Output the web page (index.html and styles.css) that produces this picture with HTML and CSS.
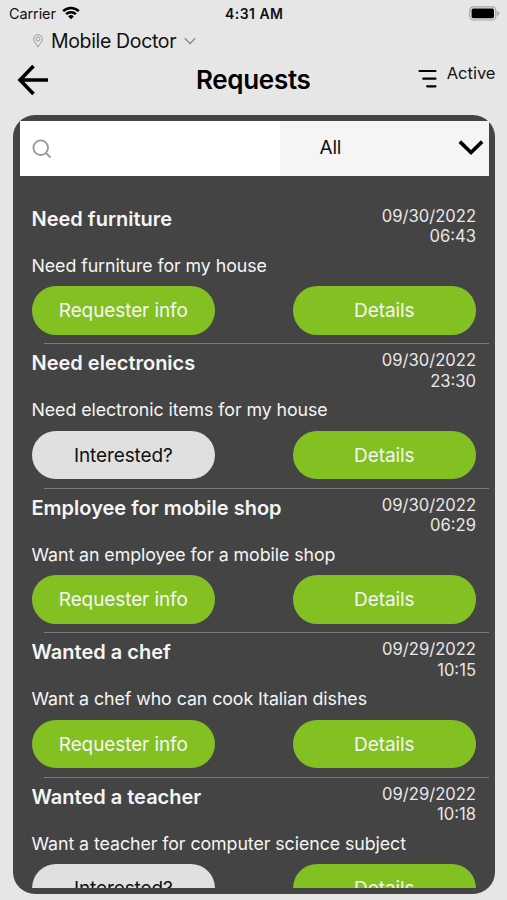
FILE: index.html
```html
<!DOCTYPE html>
<html lang="en">

<head>
    <meta charset="utf-8" />
    <title>Requests</title>
    <meta name="viewport" content="width=device-width, initial-scale=1.0" />
    <link rel="stylesheet" href="styles.css">
</head>

<body>
    <div class="screen">
        <div class="status-bar">
            <div class="carrier">
                <span>Carrier</span>
                <svg class="wifi" viewBox="0 0 18 14">
                    <path d="M1.2 5.2a11.2 11.2 0 0 1 15.6 0M4.1 8.2a7 7 0 0 1 9.8 0" />
                    <path class="dot" d="M9 13.2L6.2 10.4a4 4 0 0 1 5.6 0z" />
                </svg>
            </div>
            <div class="clock">4:31 AM</div>
            <svg class="battery" viewBox="0 0 31 15">
                <rect class="shell" x="0.8" y="0.8" width="26" height="13.2" rx="3.6" />
                <rect class="level" x="2.6" y="2.6" width="22.4" height="9.6" rx="1.6" />
                <path class="tip" d="M28.2 5v5q2-.8 2-2.5t-2-2.5z" />
            </svg>
        </div>

        <div class="location">
            <svg class="pin" viewBox="0 0 10 14">
                <path d="M5 13C3.8 10.6.7 8 .7 5a4.3 4.3 0 0 1 8.6 0c0 3-3.1 5.6-4.3 8z" />
                <circle cx="5" cy="5" r="2" />
            </svg>
            <span>Mobile Doctor</span>
            <svg class="caret" viewBox="0 0 12 8">
                <path d="M.7 1.2L6 6.5l5.3-5.3" />
            </svg>
        </div>

        <div class="header">
            <svg class="back" viewBox="0 0 32 32">
                <path d="M16.5 2L3 16l13.500 14M3 16h28" />
            </svg>
            <h1>Requests</h1>
            <div class="filter">
                <svg viewBox="0 0 19 20">
                    <path d="M1.5 2h16M5.3 9.7h12.2M9.1 17.3h8.4" />
                </svg>
                <span>Active</span>
            </div>
        </div>

        <div class="panel">
            <div class="search-bar">
                <div class="search">
                    <svg viewBox="0 0 20 20">
                        <circle cx="8.7" cy="8.7" r="7.3" />
                        <path d="M14 14l4.5 4.5" />
                    </svg>
                </div>
                <div class="category">
                    <span>All</span>
                    <svg viewBox="0 0 24 16">
                        <path d="M1.5 2.5L12 12.7 22.5 2.5" />
                    </svg>
                </div>
            </div>

            <div class="list">
                <div class="item">
                    <div class="item-top">
                        <h2>Need furniture</h2>
                        <div class="date">09/30/2022<br>06:43</div>
                    </div>
                    <p>Need furniture for my house</p>
                    <div class="actions">
                        <div class="btn">Requester info</div>
                        <div class="btn">Details</div>
                    </div>
                </div>
                <div class="item">
                    <div class="item-top">
                        <h2>Need electronics</h2>
                        <div class="date">09/30/2022<br>23:30</div>
                    </div>
                    <p>Need electronic items for my house</p>
                    <div class="actions">
                        <div class="btn light">Interested?</div>
                        <div class="btn">Details</div>
                    </div>
                </div>
                <div class="item">
                    <div class="item-top">
                        <h2>Employee for mobile shop</h2>
                        <div class="date">09/30/2022<br>06:29</div>
                    </div>
                    <p>Want an employee for a mobile shop</p>
                    <div class="actions">
                        <div class="btn">Requester info</div>
                        <div class="btn">Details</div>
                    </div>
                </div>
                <div class="item">
                    <div class="item-top">
                        <h2>Wanted a chef</h2>
                        <div class="date">09/29/2022<br>10:15</div>
                    </div>
                    <p>Want a chef who can cook Italian dishes</p>
                    <div class="actions">
                        <div class="btn">Requester info</div>
                        <div class="btn">Details</div>
                    </div>
                </div>
                <div class="item">
                    <div class="item-top">
                        <h2>Wanted a teacher</h2>
                        <div class="date">09/29/2022<br>10:18</div>
                    </div>
                    <p>Want a teacher for computer science subject</p>
                    <div class="actions">
                        <div class="btn light">Interested?</div>
                        <div class="btn">Details</div>
                    </div>
                </div>
            </div>
        </div>
    </div>
</body>

</html>
```
FILE: styles.css
```css
:root {
    --page: #e6e6e6;
    --panel: #444444;
    --green: #83c122;
    --light: #e0e0e0;
}

* {
    margin: 0;
    padding: 0;
    box-sizing: border-box;
}

body {
    background-color: var(--page);
    font-family: Inter, "Liberation Sans", sans-serif;
    color: #111;
}

svg {
    display: block;
    flex: none;
    fill: none;
    stroke: currentColor;
}

.screen {
    height: 900px;
    padding: 0 12.5px 6px 13px;
    display: flex;
    flex-direction: column;
    overflow: hidden;
}

.status-bar {
    height: 27px;
    margin: 0 -5px 0 -4px;
    display: grid;
    grid-template-columns: 1fr auto 1fr;
    align-items: center;
    font-size: 14.5px;
}

.carrier {
    display: flex;
    align-items: center;
    gap: 6px;
    letter-spacing: -0.1px;
}

.wifi {
    width: 18px;
    height: 14px;
    margin-top: -1px;
    stroke: #000;
    stroke-width: 2.5;
}

.wifi .dot {
    fill: #000;
    stroke: none;
}

.clock {
    font-size: 14px;
    font-weight: 600;
    letter-spacing: 0.45px;
}

.battery {
    width: 31px;
    height: 15px;
    justify-self: end;
}

.battery .shell {
    stroke: #a5a5a5;
    stroke-width: 1.2;
}

.battery .level {
    fill: #000;
    stroke: none;
}

.battery .tip {
    fill: #a5a5a5;
    stroke: none;
}

.location {
    height: 28px;
    padding-left: 20px;
    display: flex;
    align-items: center;
    font-size: 19.5px;
    letter-spacing: -0.35px;
}

.pin {
    width: 10px;
    height: 14px;
    margin-right: 8px;
    color: #999;
}

.caret {
    width: 12px;
    height: 8px;
    margin-top: -1px;
    margin-left: 8px;
    color: #888;
    stroke-width: 1.3;
}

.header {
    height: 60px;
    padding-bottom: 11px;
    display: grid;
    grid-template-columns: 1fr auto 1fr;
    align-items: center;
}

.back {
    width: 32px;
    height: 32px;
    margin-left: 3.5px;
    color: #000;
    stroke-width: 3.6;
}

.header h1 {
    margin-left: -1px;
    font-size: 26px;
    font-weight: 600;
    letter-spacing: -0.3px;
    color: #000;
}

.filter {
    display: flex;
    justify-content: flex-end;
    gap: 10px;
    margin-right: -1px;
    font-size: 16.5px;
}

.filter svg {
    width: 19px;
    height: 20px;
    margin-top: -2px;
    color: #000;
    stroke-width: 2.2;
    stroke-linecap: round;
}

.filter span {
    margin-top: -8px;
}

.panel {
    flex: 1;
    min-height: 0;
    padding: 6px 6px 6px 6.5px;
    border-radius: 22px;
    background-color: var(--panel);
    display: flex;
    flex-direction: column;
}

.search-bar {
    height: 55px;
    flex: none;
    display: flex;
    background-color: #fff;
}

.search {
    flex: 1;
    padding-left: 12.5px;
    display: flex;
    align-items: center;
}

.search svg {
    width: 20px;
    height: 20px;
    color: #999;
    stroke-width: 1.8;
}

.category {
    width: 208.5px;
    padding: 0 5px 2px 39.5px;
    display: flex;
    align-items: center;
    justify-content: space-between;
    background-color: #f5f5f5;
    font-size: 19px;
    letter-spacing: -0.2px;
}

.category svg {
    width: 26px;
    height: 17px;
    color: #000;
    stroke-width: 3.4;
}

.list {
    flex: 1;
    min-height: 0;
    padding-top: 23.5px;
    overflow: hidden;
    color: #f5f5f5;
}

.item {
    height: 144.6px;
    padding: 6px 12.5px 0 12px;
    background: linear-gradient(#7b7b7b, #7b7b7b) 24.5px 100% / 100% 1px no-repeat;
}

.item-top {
    height: 49px;
    display: flex;
    justify-content: space-between;
}

.item h2 {
    font-size: 20px;
    font-weight: 600;
    line-height: 26.4px;
}

.date {
    font-size: 16.6px;
    line-height: 20.4px;
    text-align: right;
    color: #e8e8e8;
}

.item p {
    height: 31.5px;
    font-size: 17.8px;
    line-height: 22px;
    letter-spacing: -0.07px;
    white-space: nowrap;
}

.actions {
    display: flex;
    justify-content: space-between;
}

.btn {
    width: 183.5px;
    height: 48.5px;
    border-radius: 24.25px;
    background-color: var(--green);
    font-size: 19px;
    line-height: 49.6px;
    letter-spacing: -0.1px;
    text-align: center;
}

.btn.light {
    background-color: var(--light);
    color: #111;
}
```
